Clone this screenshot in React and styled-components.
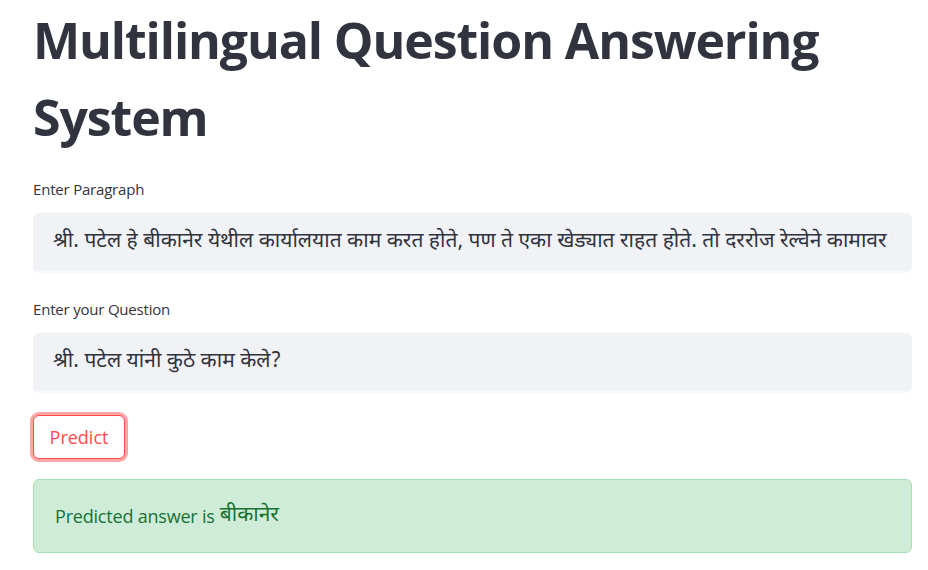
import React from "react"
import styled, { createGlobalStyle } from "styled-components"

const GlobalStyle = createGlobalStyle`
  html, body {
    margin: 0;
    padding: 0;
    background: #ffffff;
  }
  body {
    font-family: "Open Sans", "Noto Sans", "Noto Sans Devanagari", sans-serif;
    color: rgb(49, 51, 63);
  }
`

const paragraph =
  "श्री. पटेल हे बीकानेर येथील कार्यालयात काम करत होते, पण ते एका खेड्यात राहत होते. तो दररोज रेल्वेने कामावर येत असे."

const App = () => {
  return (
    <Main>
      <GlobalStyle />
      <Title>Multilingual Question Answering System</Title>
      <Field>
        <Label>Enter Paragraph</Label>
        <Input readOnly value={paragraph} />
      </Field>
      <Field>
        <Label>Enter your Question</Label>
        <Input readOnly value="श्री. पटेल यांनी कुठे काम केले?" />
      </Field>
      <ButtonRow>
        <Button>Predict</Button>
      </ButtonRow>
      <Alert>
        Predicted answer is <Devanagari>बीकानेर</Devanagari>
      </Alert>
    </Main>
  )
}

const Main = styled.main`
  box-sizing: border-box;
  width: 928px;
  padding: 2px 16px 0 33px;
`

const Title = styled.h1`
  margin: 0 0 19px;
  font-family: "Open Sans", sans-serif;
  font-weight: 700;
  font-size: 50px;
  line-height: 77px;
  letter-spacing: -1.1px;
  color: rgb(49, 51, 63);
`

const Field = styled.div`
  display: flex;
  flex-direction: column;
  margin-bottom: 22px;
`

const Label = styled.label`
  padding-top: 4px;
  font-size: 15px;
  line-height: 20px;
  margin-bottom: 14px;
  letter-spacing: -0.2px;
  color: rgb(49, 51, 63);
`

const Input = styled.input`
  box-sizing: border-box;
  width: 879px;
  height: 60px;
  padding: 0 20px;
  border: none;
  border-bottom: 2px solid #f7f8fa;
  border-radius: 6px;
  background: #f0f2f6;
  font-family: "Noto Sans Devanagari", "Noto Sans", sans-serif;
  font-weight: 400;
  font-size: 21px;
  color: rgb(49, 51, 63);
  outline: none;
`

const ButtonRow = styled.div`
  padding: 0 0 20px;
`

const Button = styled.button`
  box-sizing: border-box;
  width: 92px;
  height: 44px;
  border: 1px solid #ff4b4b;
  border-radius: 6px;
  background: #ffffff;
  color: #ff4b4b;
  font-family: "Open Sans", sans-serif;
  font-size: 18px;
  box-shadow: 0 0 0 3px rgba(255, 75, 75, 0.5);
  cursor: pointer;
`

const Alert = styled.div`
  box-sizing: border-box;
  width: 879px;
  height: 74px;
  display: flex;
  align-items: center;
  padding: 0 21px;
  border: 1px solid #a8e0b8;
  border-radius: 6px;
  background: #cfecd8;
  color: rgb(23, 114, 51);
  font-size: 18px;
  letter-spacing: -0.2px;
  gap: 5px;
`

const Devanagari = styled.span`
  font-family: "Noto Sans Devanagari", "Noto Sans", sans-serif;
  font-weight: 400;
  font-size: 21px;
  letter-spacing: 0;
`

export default App
